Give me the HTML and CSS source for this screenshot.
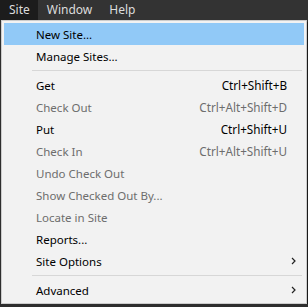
FILE: index.html
```html
<!DOCTYPE html>
<html lang="en">
<head>
    <meta charset="UTF-8">
    <meta name="viewport" content="width=device-width, initial-scale=1.0">
    <title>Site menu</title>
    <link rel="stylesheet" href="styles.css">
</head>
<body>
    <div class="menubar">
        <div class="top-item open">Site</div>
        <div class="top-item">Window</div>
        <div class="top-item">Help</div>
    </div>
    <div class="menu">
        <div class="item active"><span class="label">New Site...</span></div>
        <div class="item"><span class="label">Manage Sites...</span></div>
        <div class="separator"></div>
        <div class="item"><span class="label">Get</span><span class="key">Ctrl+Shift+B</span></div>
        <div class="item disabled"><span class="label">Check Out</span><span class="key">Ctrl+Alt+Shift+D</span></div>
        <div class="item"><span class="label">Put</span><span class="key">Ctrl+Shift+U</span></div>
        <div class="item disabled"><span class="label">Check In</span><span class="key">Ctrl+Alt+Shift+U</span></div>
        <div class="item disabled"><span class="label">Undo Check Out</span></div>
        <div class="item disabled"><span class="label">Show Checked Out By...</span></div>
        <div class="item disabled"><span class="label">Locate in Site</span></div>
        <div class="item"><span class="label">Reports...</span></div>
        <div class="item">
            <span class="label">Site Options</span>
            <svg class="arrow" width="5" height="8" viewBox="0 0 5 8"><path d="M1 1 L4 4 L1 7" fill="none" stroke="#222" stroke-width="1.2"/></svg>
        </div>
        <div class="separator"></div>
        <div class="item">
            <span class="label">Advanced</span>
            <svg class="arrow" width="5" height="8" viewBox="0 0 5 8"><path d="M1 1 L4 4 L1 7" fill="none" stroke="#222" stroke-width="1.2"/></svg>
        </div>
    </div>
</body>
</html>
```

FILE: styles.css
```css
*{
    box-sizing: border-box;
    font-family: 'Noto Sans', 'Open Sans', sans-serif;
}

body{
    margin: 0;
    background-color: #2e2e2e;
    font-size: 12px;
}

.menubar{
    display: flex;
    height: 20px;
    background-color: #333333;
}

.top-item{
    padding: 0 8px 0 9px;
    line-height: 20px;
    color: #dcdcdc;
}

.top-item.open{
    background-color: #1c1c1c;
}

.menu{
    width: 306px;
    margin-left: 1px;
    padding: 2px 2px;
    background-color: #f2f2f2;
    border: 1px solid #cccccc;
    box-shadow: 2px 2px 1px rgba(0, 0, 0, 0.45);
}

.item{
    display: grid;
    grid-template-columns: 1fr auto 17px;
    align-items: center;
    height: 22px;
    padding-left: 32px;
    color: #000000;
}

.item.active{
    background-color: #91c9f7;
}

.item.disabled{
    color: #6d6d6d;
}

.item .label{
    grid-column: 1;
    font-size: 11.5px;
}

.item .key{
    grid-column: 2;
    text-align: right;
    font-size: 11.7px;
}

.item .arrow{
    grid-column: 3;
    margin-left: 4px;
}

.separator{
    height: 7px;
    padding-top: 3px;
    margin: 0 2px 0 28px;
}

.separator::after{
    content: "";
    display: block;
    height: 1px;
    background-color: #d7d7d7;
}
```
